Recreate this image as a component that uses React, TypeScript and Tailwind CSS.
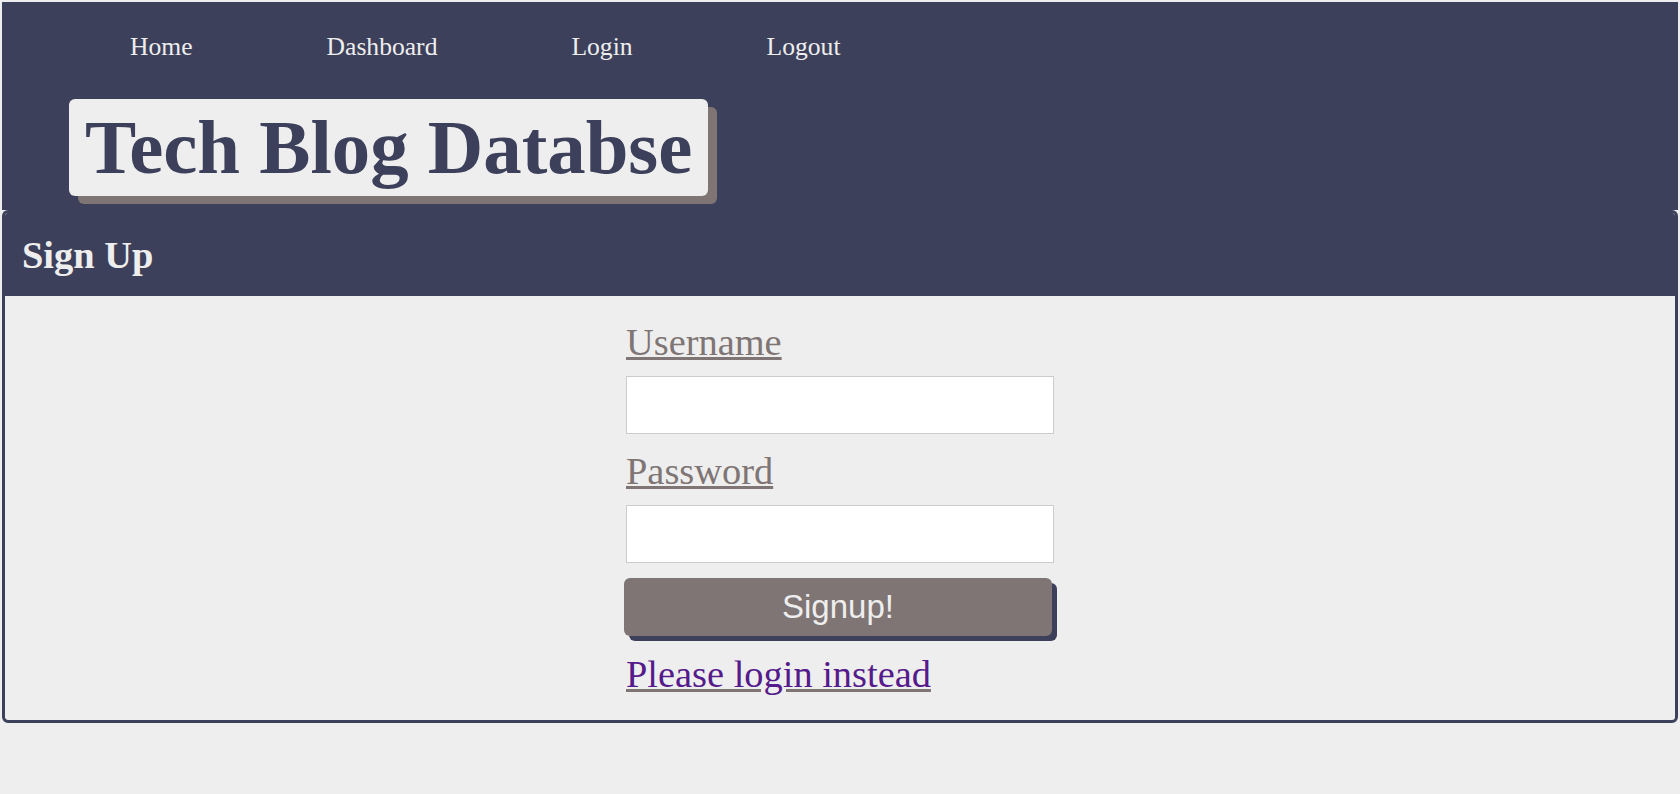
import React from 'react';

const serif = { fontFamily: '"Liberation Serif", "Times New Roman", serif' };

export default function App() {
    const links = ['Home', 'Dashboard', 'Login', 'Logout'];

    return (
        <div className="min-h-screen bg-[#eeeeee] pt-[2px] px-[2px]" style={serif}>
            <header className="h-[208px] bg-[#3d405b]">
                <nav className="flex gap-[134px] pl-[128px] pt-[30px] text-[25.6px] leading-[30px] text-[#eeeeee]">
                    {links.map(link => (
                        <a key={link} href="#">{link}</a>
                    ))}
                </nav>
                <div className="pl-[67px] pt-[37px]">
                    <h1 className="inline-block rounded-[6px] bg-[#eeeeee] px-[16px] py-[4px] text-[76.8px] font-bold leading-[89px] text-[#3d405b] shadow-[9px_8px_0_#7e7574]">
                        Tech Blog Databse
                    </h1>
                </div>
            </header>

            <section className="overflow-hidden rounded-[6px] border-[3px] border-[#3d405b]">
                <div className="bg-[#3d405b] px-[17px] pt-[20px] pb-[19px]">
                    <h2 className="text-[38.4px] font-bold leading-[44px] text-[#eeeeee]">Sign Up</h2>
                </div>

                <form className="mx-auto w-[428px] pt-[24px] pb-[24px]" onSubmit={e => e.preventDefault()}>
                    <label htmlFor="username" className="block text-[38.4px] leading-[44px] text-[#7e7574] underline decoration-[#7e7574]">
                        Username
                    </label>
                    <input id="username" type="text" className="mt-[12px] block h-[58px] w-full border border-[#cccccc] bg-white" />

                    <label htmlFor="password" className="mt-[15px] block text-[38.4px] leading-[44px] text-[#7e7574] underline decoration-[#7e7574]">
                        Password
                    </label>
                    <input id="password" type="password" className="mt-[12px] block h-[58px] w-full border border-[#cccccc] bg-white" />

                    <button
                        type="submit"
                        className="-ml-[2px] mt-[15px] block h-[58px] w-[428px] rounded-[6px] bg-[#7e7574] text-[33px] text-[#eeeeee] shadow-[5px_5px_0_#3d405b]"
                        style={{ fontFamily: '"Liberation Sans", Arial, sans-serif' }}
                    >
                        Signup!
                    </button>

                    <a href="#" className="mt-[16px] block w-fit text-[38.4px] leading-[44px] text-[#551a8b] underline decoration-[#7e7574]">
                        Please login instead
                    </a>
                </form>
            </section>
        </div>
    );
}
